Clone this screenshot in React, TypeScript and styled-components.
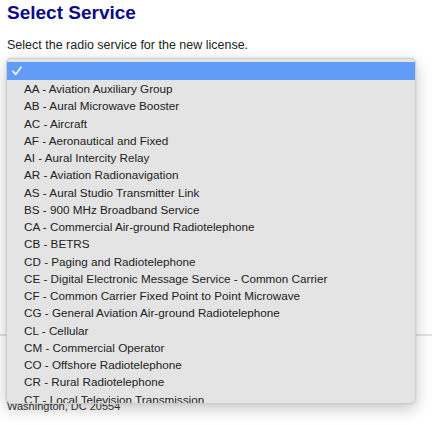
import React from "react";
import styled, { createGlobalStyle } from "styled-components";

const Global = createGlobalStyle`
  html, body { margin: 0; padding: 0; background: #ffffff; }
  body { width: 432px; height: 425px; overflow: hidden; position: relative; }
`;

const Page = styled.div`
  padding: 0 7px;
  font-family: "Liberation Sans", Arial, sans-serif;
  color: #222;
`;

const Heading = styled.h1`
  margin: 0;
  padding-top: 2px;
  font-size: 19px;
  line-height: 22px;
  font-weight: bold;
  color: #0b0b8a;
`;

const Caption = styled.p`
  margin: 13px 0 0;
  font-size: 12.5px;
  line-height: 16px;
  color: #222;
`;

const Spacer = styled.div`
  height: 281px;
`;

const Rule = styled.hr`
  margin: 0 -7px;
  border: 0;
  border-top: 2px solid #e2e2e2;
`;

const Address = styled.div`
  margin-top: 46px;
  font-size: 11px;
  line-height: 16px;
  color: #333;
`;

const Popup = styled.div`
  position: absolute;
  left: 6px;
  top: 58px;
  width: 410px;
  height: 346px;
  box-sizing: border-box;
  overflow: hidden;
  background: #e4e4e4;
  border: 1px solid #cfcfcf;
  border-radius: 5px;
  box-shadow: 0 5px 16px rgba(0, 0, 0, 0.22), 0 0 2px rgba(0, 0, 0, 0.12);
  padding-top: 3px;
  font-family: "Liberation Sans", Arial, sans-serif;
  font-size: 11.7px;
`;

const Row = styled.div<{ $selected?: boolean }>`
  display: flex;
  align-items: center;
  height: ${(p) => (p.$selected ? "18px" : "17.25px")};
  padding-left: 17px;
  background: ${(p) => (p.$selected ? "#619cf7" : "transparent")};
  color: ${(p) => (p.$selected ? "#fff" : "#222")};
  white-space: nowrap;
  position: relative;
`;

const Check = styled.svg`
  position: absolute;
  left: 5px;
  top: 4px;
`;

const items = [
  "AA - Aviation Auxiliary Group",
  "AB - Aural Microwave Booster",
  "AC - Aircraft",
  "AF - Aeronautical and Fixed",
  "AI - Aural Intercity Relay",
  "AR - Aviation Radionavigation",
  "AS - Aural Studio Transmitter Link",
  "BS - 900 MHz Broadband Service",
  "CA - Commercial Air-ground Radiotelephone",
  "CB - BETRS",
  "CD - Paging and Radiotelephone",
  "CE - Digital Electronic Message Service - Common Carrier",
  "CF - Common Carrier Fixed Point to Point Microwave",
  "CG - General Aviation Air-ground Radiotelephone",
  "CL - Cellular",
  "CM - Commercial Operator",
  "CO - Offshore Radiotelephone",
  "CR - Rural Radiotelephone",
  "CT - Local Television Transmission",
];

export default function App() {
  return (
    <>
      <Global />
      <Page>
        <Heading>Select Service</Heading>
        <Caption>Select the radio service for the new license.</Caption>
        <Spacer />
        <Rule />
        <Address>
          Federal Communications Commission
          <br />
          Washington, DC 20554
        </Address>
      </Page>
      <Popup>
        <Row $selected>
          <Check width="10" height="10" viewBox="0 0 10 10">
            <path d="M1 5.4 L3.8 8.4 L9 1.2" fill="none" stroke="#fff" strokeWidth="1.6" strokeLinecap="round" strokeLinejoin="round" />
          </Check>
        </Row>
        {items.map((t) => (
          <Row key={t}>{t}</Row>
        ))}
      </Popup>
    </>
  );
}
